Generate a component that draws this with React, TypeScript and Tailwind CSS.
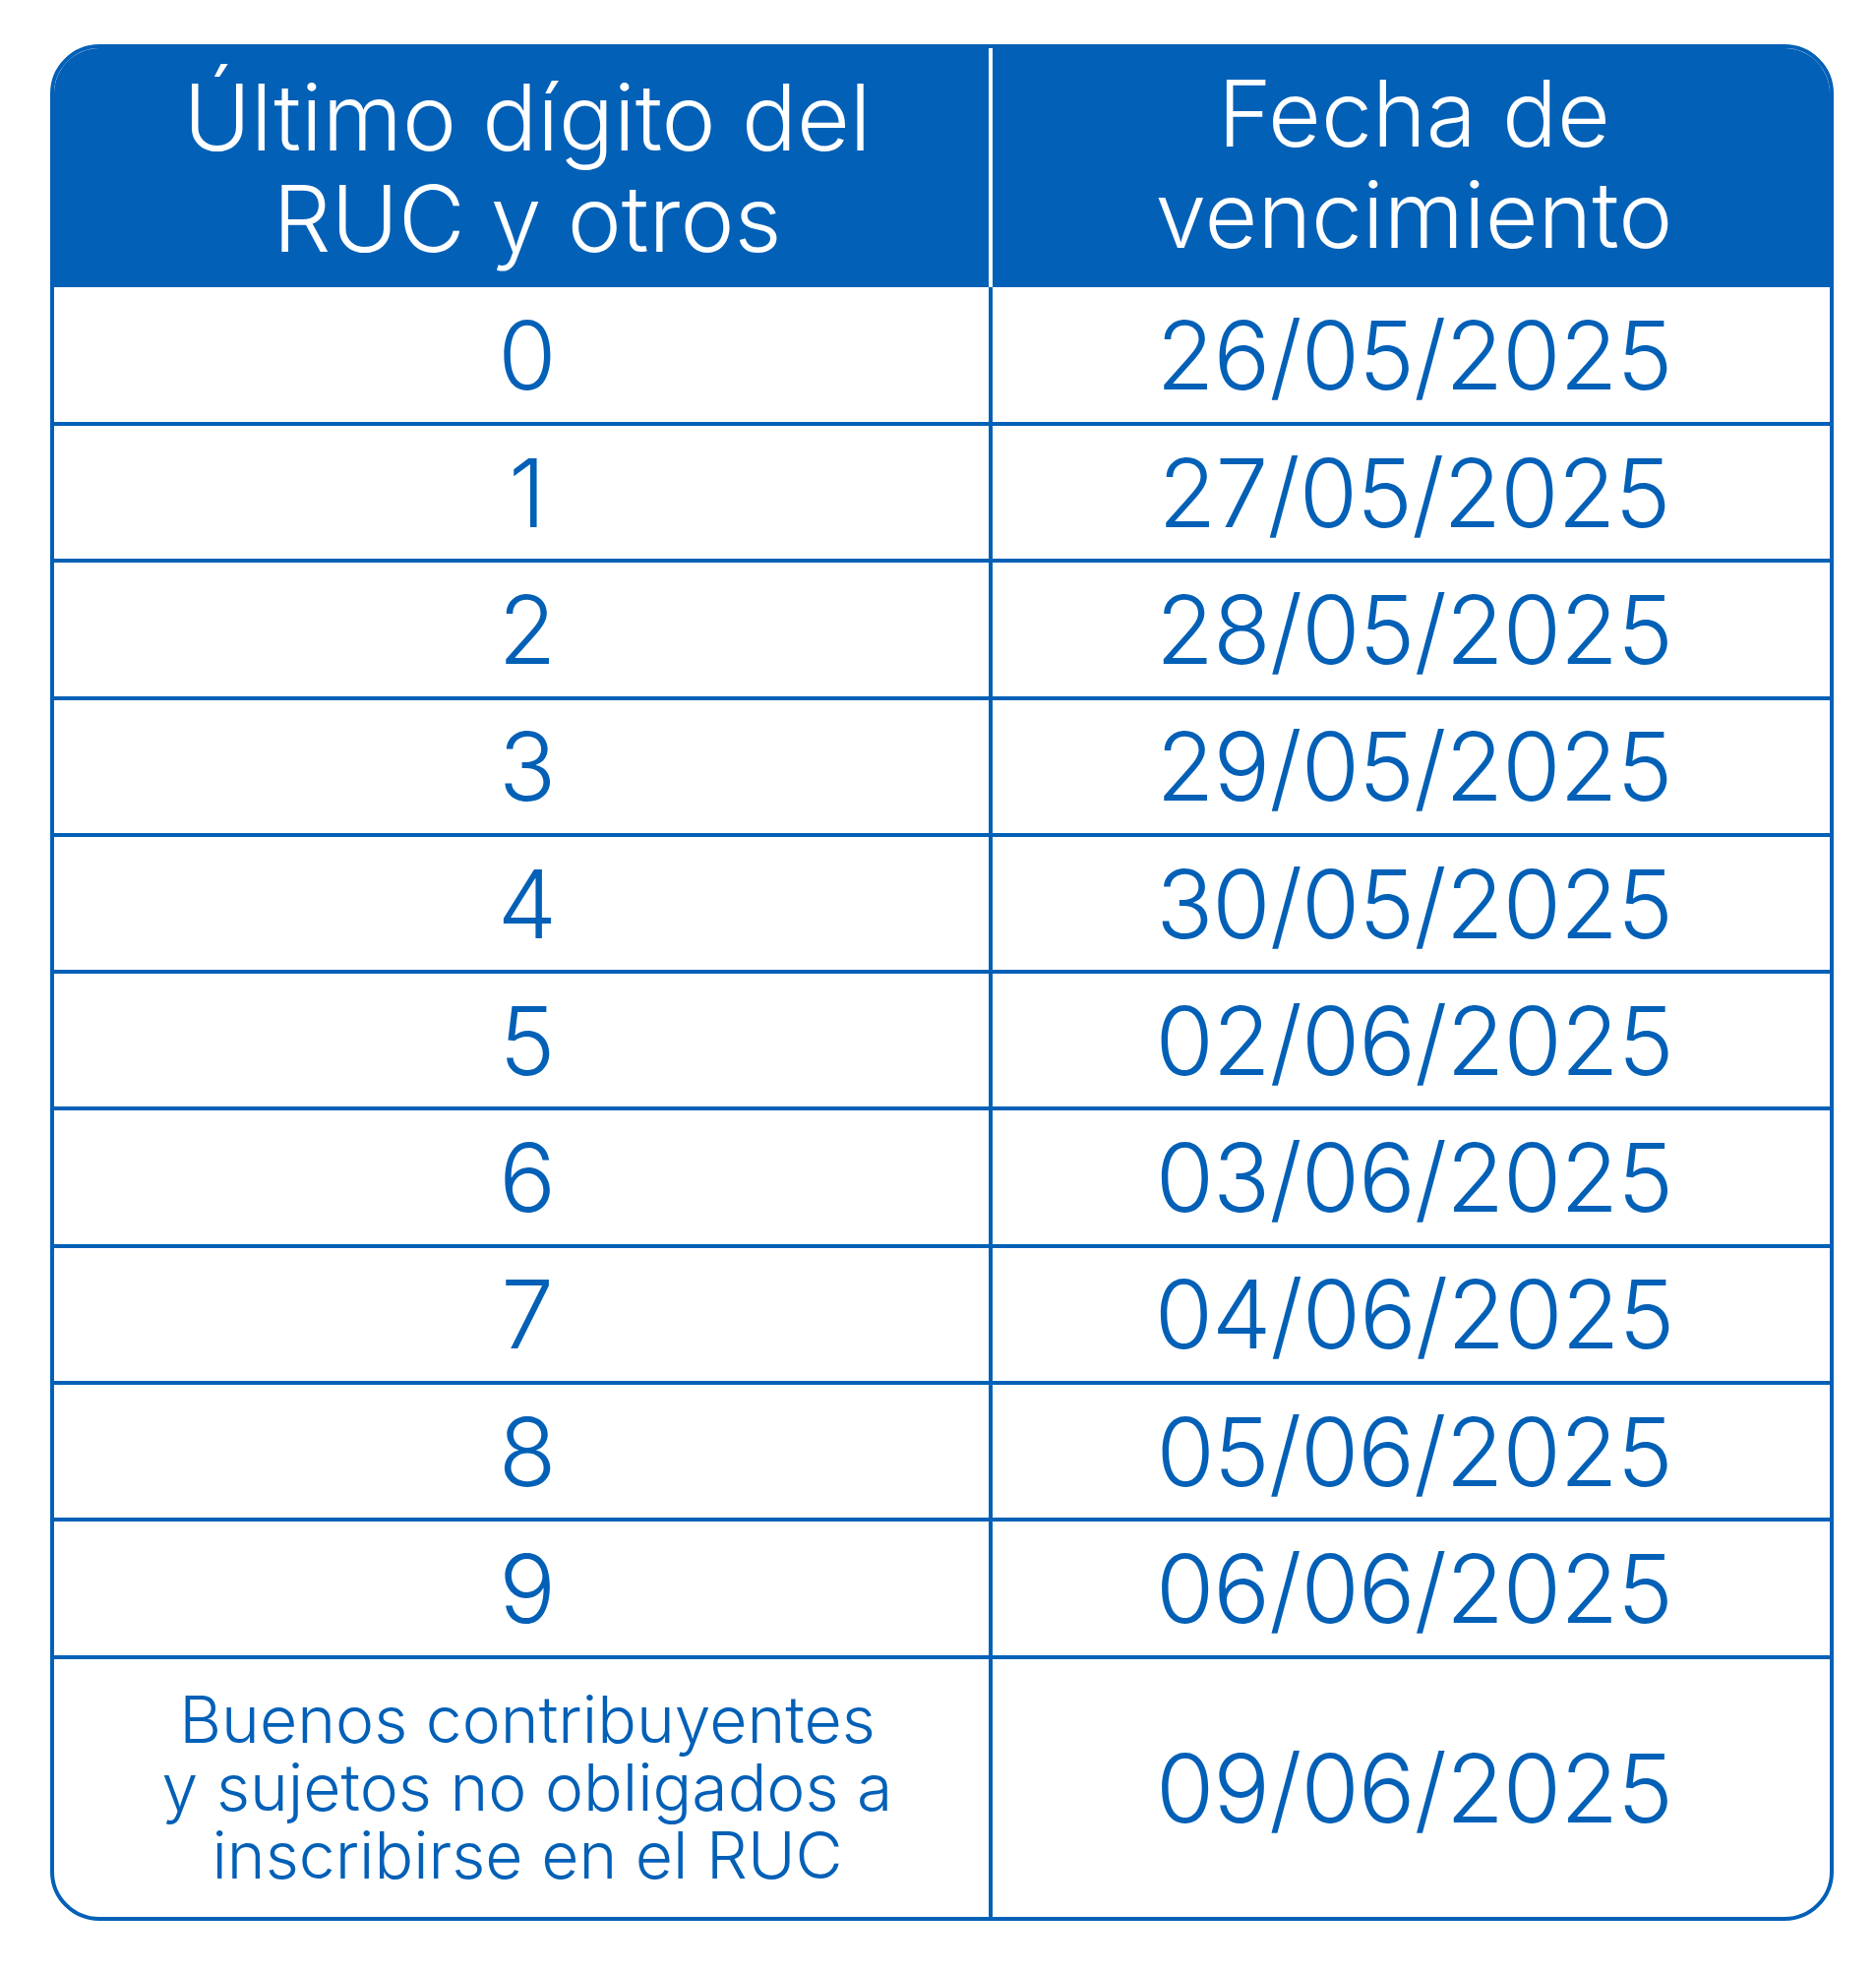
const rows = [
  ["0", "26/05/2025"],
  ["1", "27/05/2025"],
  ["2", "28/05/2025"],
  ["3", "29/05/2025"],
  ["4", "30/05/2025"],
  ["5", "02/06/2025"],
  ["6", "03/06/2025"],
  ["7", "04/06/2025"],
  ["8", "05/06/2025"],
  ["9", "06/06/2025"],
];

const blue = "text-[#0360b7]";
const left = `flex items-center justify-center pl-[12px] text-[96px] leading-none ${blue}`;
const right = `flex items-center justify-center pl-[6px] text-[96px] leading-none tracking-[-1px] border-l-4 border-[#0360b7] ${blue}`;

export default function App() {
  return (
    <div className="w-[1907px] h-[2003px] bg-white pl-[51px] pt-[45px] font-['Inter',sans-serif] font-light">
      <div className="w-[1813px] h-[1908px] rounded-[50px] border-4 border-[#0360b7] overflow-hidden flex flex-col">
        {/* header */}
        <div className="grid grid-cols-[950px_4px_1fr] h-[243px] bg-[#0360b7] text-white text-[93px] leading-[103px] text-center">
          <div className="flex items-center justify-center pl-[12px]">
            <div>
              Último dígito del
              <br />
              RUC y otros
            </div>
          </div>
          <div className="bg-white" />
          <div className="flex items-center justify-center pl-[6px] pb-[8px]">
            <div>
              Fecha de
              <br />
              vencimiento
            </div>
          </div>
        </div>

        {rows.map(([d, date], i) => (
          <div
            key={d}
            className={
              i === 0
                ? "grid grid-cols-[950px_1fr] h-[137px]"
                : "grid grid-cols-[950px_1fr] h-[139.3px] border-t-4 border-[#0360b7]"
            }
          >
            <div className={left}>{d}</div>
            <div className={right}>{date}</div>
          </div>
        ))}

        <div className="grid grid-cols-[950px_1fr] flex-1 border-t-4 border-[#0360b7]">
          <div className={`flex items-center justify-center pl-[12px] text-center text-[66px] leading-[69px] ${blue}`}>
            <div>
              Buenos contribuyentes
              <br />
              y sujetos no obligados a
              <br />
              inscribirse en el RUC
            </div>
          </div>
          <div className={right}>09/06/2025</div>
        </div>
      </div>
    </div>
  );
}
